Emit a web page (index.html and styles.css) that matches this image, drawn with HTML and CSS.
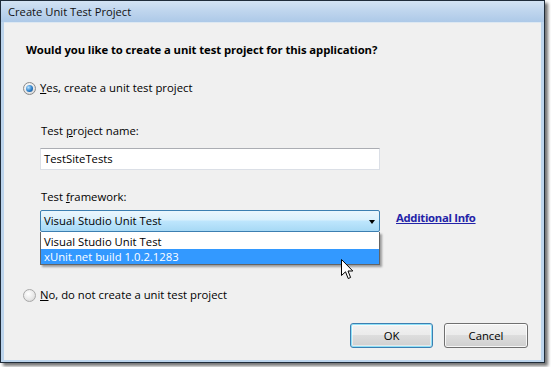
FILE: index.html
```html
<!DOCTYPE html>
<html>
<head>
<meta charset="utf-8">
<link rel="stylesheet" href="styles.css">
</head>
<body>
<div class="window">
  <div class="titlebar">Create Unit Test Project</div>
  <div class="content">
    <div class="heading">Would you like to create a unit test project for this application?</div>
    <div class="radio-row first">
      <span class="radio checked"></span>
      <span class="radio-text"><u>Y</u>es, create a unit test project</span>
    </div>
    <div class="group">
      <div class="label">Test <u>p</u>roject name:</div>
      <div class="textbox">TestSiteTests</div>
      <div class="label fw">Test <u>f</u>ramework:</div>
      <div class="combo-row">
        <div class="combo-wrap">
          <div class="combo">
            <span class="combo-text">Visual Studio Unit Test</span>
            <span class="arrow"></span>
          </div>
          <div class="dropdown">
            <div class="item">Visual Studio Unit Test</div>
            <div class="item selected">xUnit.net build 1.0.2.1283</div>
          </div>
        </div>
        <a class="link">Additional Info</a>
      </div>
    </div>
    <div class="radio-row second">
      <span class="radio"></span>
      <span class="radio-text"><u>N</u>o, do not create a unit test project</span>
    </div>
    <div class="buttons">
      <div class="btn default">OK</div>
      <div class="btn">Cancel</div>
    </div>
  </div>
  <svg class="cursor" width="13" height="21" viewBox="0 0 13 21">
    <path d="M0.5 0.5 L0.5 16.5 L4.5 12.8 L7.2 19.5 L9.6 18.5 L7 12 L11.8 12 Z" fill="#fff" stroke="#000" stroke-width="1" stroke-linejoin="miter"/>
  </svg>
</div>
</body>
</html>
```

FILE: styles.css
```css
* { box-sizing: border-box; }
html, body { margin: 0; padding: 0; background: #fff; }
body {
  width: 551px;
  height: 367px;
  overflow: hidden;
  font-family: "Open Sans", "Noto Sans", sans-serif;
  font-size: 11.3px;
  color: #000;
}
.window {
  position: relative;
  width: 545px;
  height: 363px;
  border: 1px solid #1f2c3a;
  background: #bcd4ec;
  padding: 0 3px 2px 3px;
  box-shadow: 3px 3px 3px rgba(0, 0, 0, 0.55);
  display: flex;
  flex-direction: column;
}
.titlebar {
  height: 21px;
  flex: none;
  margin: 0 -3px;
  padding-left: 7px;
  line-height: 22px;
  font-size: 11.2px;
  color: #111;
  background: linear-gradient(to bottom, #d3e3f3 0%, #c0d6ee 45%, #adc9e8 100%);
}
.content {
  flex: 1;
  background: #f0f0f0;
  border-top: 1px solid #dde8f2;
  padding-left: 20px;
  padding-right: 13px;
  display: flex;
  flex-direction: column;
}
.heading {
  margin-top: 19px;
  margin-left: 2px;
  line-height: 16px;
  font-weight: bold;
  letter-spacing: -0.08px;
}
.radio-row {
  display: flex;
  align-items: center;
  height: 16px;
  line-height: 16px;
}
.radio-row.first { margin-top: 22px; }
.radio-row.second { margin-top: 55px; }
.radio {
  width: 13px;
  height: 13px;
  border-radius: 50%;
  border: 1px solid #8a8a8a;
  background: radial-gradient(circle at 40% 35%, #ffffff 0%, #e6e6e6 60%, #cbcbcb 100%);
  margin-right: 4px;
  margin-left: -1px;
  flex: none;
  display: flex;
  align-items: center;
  justify-content: center;
}
.radio.checked::after {
  content: "";
  width: 7px;
  height: 7px;
  border-radius: 50%;
  background: radial-gradient(circle at 35% 35%, #b8e2ff 0%, #2b7fc9 55%, #16457c 100%);
}
.radio-row.second .radio { border-color: #a8a8a8; }
.group {
  padding-left: 16px;
  display: flex;
  flex-direction: column;
}
.label {
  margin-top: 27px;
  margin-left: 1px;
  line-height: 16px;
}
.label.fw { margin-top: 19px; }
.textbox {
  margin-top: 9px;
  width: 340px;
  height: 22px;
  background: #fff;
  border: 1px solid #dbdfe6;
  border-top-color: #abadb3;
  padding-left: 3px;
  line-height: 20px;
}
.combo-row {
  margin-top: 5px;
  display: flex;
  align-items: flex-start;
}
.combo-wrap {
  position: relative;
  width: 340px;
  flex: none;
}
.combo {
  height: 22px;
  border: 1px solid #3c7fb1;
  border-radius: 2px;
  background: linear-gradient(to bottom, #eaf6fd 0%, #d9f0fc 45%, #bee6fd 50%, #a7d9f5 100%);
  display: flex;
  align-items: center;
  justify-content: space-between;
  padding-left: 3px;
  padding-right: 4px;
  line-height: 20px;
}
.arrow {
  width: 0;
  height: 0;
  border-left: 3.5px solid transparent;
  border-right: 3.5px solid transparent;
  border-top: 4px solid #000;
  margin-top: 2px;
}
.dropdown {
  position: absolute;
  left: 0;
  top: 22px;
  width: 340px;
  height: 33px;
  background: #fff;
  border: 1px solid #646464;
  border-top: none;
  padding: 1px 0 1px 0;
  box-shadow: 2px 2px 2px rgba(0, 0, 0, 0.35);
  z-index: 2;
}
.item {
  height: 15px;
  line-height: 15px;
  padding-left: 3px;
}
.item:first-child { margin-top: 1px; }
.item.selected {
  background: #3399ff;
  color: #fff;
}
.link {
  margin-left: 16px;
  line-height: 16px;
  font-weight: bold;
  letter-spacing: -0.3px;
  color: #2323a8;
  text-decoration: underline;
}
.buttons {
  margin-top: 20px;
  display: flex;
  justify-content: flex-end;
  gap: 11px;
}
.btn {
  width: 84px;
  height: 25px;
  border: 1px solid #707070;
  border-radius: 3px;
  background: linear-gradient(to bottom, #f2f2f2 0%, #ebebeb 49%, #dddddd 50%, #cfcfcf 100%);
  box-shadow: inset 0 0 0 1px rgba(255, 255, 255, 0.8);
  text-align: center;
  line-height: 23px;
}
.btn.default {
  width: 83px;
  border-color: #3c7fb1;
  box-shadow: inset 0 0 0 1px #8ee0f7, inset 0 0 0 2px rgba(255, 255, 255, 0.5);
}
.cursor {
  position: absolute;
  left: 340px;
  top: 258px;
  z-index: 5;
}
```
